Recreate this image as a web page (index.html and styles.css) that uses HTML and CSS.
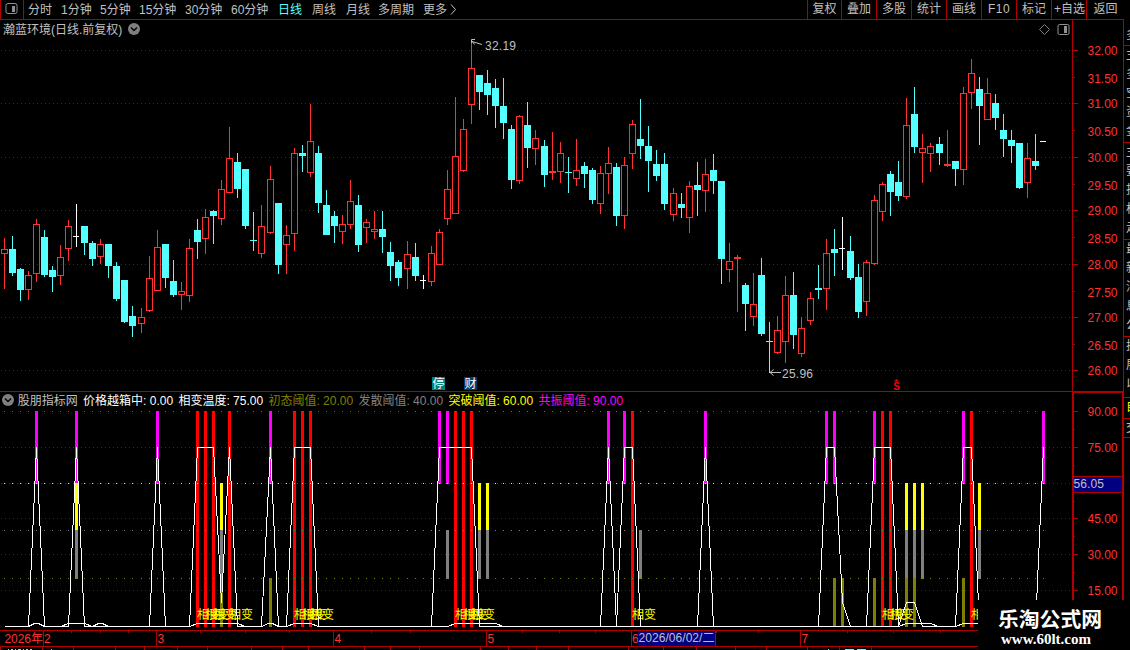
FILE: index.html
```html
<!DOCTYPE html>
<html lang="zh-CN">

<head>
  <meta charset="UTF-8">
  <meta name="viewport" content="width=device-width, initial-scale=1.0">
  <title>瀚蓝环境 日线</title>
  <link rel="stylesheet" href="styles.css">
</head>

<body>
  <div class="terminal">
    <!-- toolbar -->
    <div class="toolbar">
      <div class="layout-btn">
        <svg width="13" height="12" viewBox="0 0 13 12">
          <rect x="1" y=".5" width="11" height="10" rx="2" fill="none" stroke="#909090" />
          <rect x="7" y="3" width="3" height="6" fill="#909090" />
        </svg>
      </div>
      <div class="periods">
        <span>分时</span>
        <span>1分钟</span>
        <span>5分钟</span>
        <span>15分钟</span>
        <span>30分钟</span>
        <span>60分钟</span>
        <span class="active">日线</span>
        <span>周线</span>
        <span>月线</span>
        <span>多周期</span>
        <span>更多</span>
        <svg width="7" height="11" viewBox="0 0 7 11"><path d="M1 .5L5.5 5.5L1 10.5" fill="none" stroke="#c0c0c0" /></svg>
      </div>
      <div class="tools">
        <span>复权</span>
        <span>叠加</span>
        <span>多股</span>
        <span>统计</span>
        <span>画线</span>
        <span class="f10">F10</span>
        <span>标记</span>
        <span class="add">+自选</span>
        <span>返回</span>
      </div>
    </div>

    <div class="main">
      <div class="charts">
        <!-- kline -->
        <div class="panel kline">
          <svg id="kline" width="1124" height="371" viewBox="0 20 1124 371"></svg>
          <div class="caption">
            <span>瀚蓝环境(日线.前复权)</span>
            <svg class="fold" width="12" height="12" viewBox="0 0 12 12">
              <circle cx="6" cy="6" r="6" fill="#808080" />
              <path d="M3 4.5L6 7.5L9 4.5" fill="none" stroke="#000" stroke-width="1.4" />
            </svg>
            <div class="corner">
              <svg width="11" height="11" viewBox="0 0 11 11"><path d="M5.5 .5L10.5 5.5L5.5 10.5L.5 5.5Z" fill="none" stroke="#808080" /></svg>
              <svg width="13" height="12" viewBox="0 0 13 12">
                <rect x="1" y=".5" width="11" height="10" rx="1.5" fill="none" stroke="#909090" />
                <rect x="7" y="2" width="3" height="7" fill="#909090" />
              </svg>
            </div>
          </div>
        </div>

        <!-- indicator -->
        <div class="panel indicator">
          <svg id="indicator" width="1124" height="239" viewBox="0 391 1124 239"></svg>
          <div class="caption">
            <svg class="fold" width="12" height="12" viewBox="0 0 12 12">
              <circle cx="6" cy="6" r="6" fill="#808080" />
              <path d="M3 4.5L6 7.5L9 4.5" fill="none" stroke="#000" stroke-width="1.4" />
            </svg>
            <span>股朋指标网</span>
            <span class="white">价格越箱中: 0.00</span>
            <span class="white">相变温度: 75.00</span>
            <span class="olive">初态阈值: 20.00</span>
            <span class="gray">发散阈值: 40.00</span>
            <span class="yellow">突破阈值: 60.00</span>
            <span class="magenta">共振阈值: 90.00</span>
          </div>
        </div>

        <!-- dates -->
        <svg id="dates" width="1124" height="20" viewBox="0 630 1124 20"></svg>
      </div>

      <!-- side tabs -->
      <div class="side">
        <div class="tab t1">多</div>
        <div class="tab t2">主多空资金</div>
        <div class="tab t3">主要指标走</div>
        <div class="tab t4">最新消息公</div>
        <div class="tab t5">扩展以</div>
        <div class="tab t6">自</div>
        <div class="tab t7">交</div>
      </div>
    </div>

    <div class="watermark">
      <div class="site-name">乐淘公式网</div>
      <div class="site-url">www.60lt.com</div>
    </div>
  </div>

  <script src="chart.js"></script>
</body>

</html>
```
FILE: styles.css
```css
body {
  margin: 0;
  background: #000;
  overflow: hidden;
}

.terminal {
  position: relative;
  width: 1130px;
  height: 650px;
  overflow: hidden;
  background: #000;
  color: #c0c0c0;
  font: 12px/18px "Liberation Sans", "Noto Sans CJK SC", sans-serif;
  white-space: nowrap;
}

svg {
  display: block;
}

/* toolbar start */
.toolbar {
  display: flex;
  box-sizing: border-box;
  width: 1124px;
  height: 20px;
  border-bottom: 1px solid #b00000;
}

.layout-btn {
  box-sizing: border-box;
  width: 24px;
  padding: 3px 0 0 4px;
  border: solid #b00000;
  border-width: 0 1px;
}

.periods {
  display: grid;
  grid-template-columns: 33px 39px 39px 46px 46px 47px 34px 34px 32px 45px 27px 8px;
  align-items: center;
  margin-left: 4px;
}

.periods .active {
  color: #54ffff;
}

.tools {
  display: grid;
  grid-template-columns: 34px 35px 35px 35px 35px 35px 35px 35px 38px;
  margin-left: auto;
  line-height: 19px;
}

.tools span {
  border-left: 1px solid #b00000;
  text-align: center;
}

.tools .f10 {
  letter-spacing: .5px;
}

.tools .add {
  text-align: left;
  padding-left: 2px;
}
/* toolbar end */

.main {
  display: flex;
  height: 630px;
}

.charts {
  width: 1124px;
}

/* panel start */
.panel {
  display: grid;
}

.panel > * {
  grid-area: 1 / 1;
}

.caption {
  display: flex;
  align-items: center;
  height: 18px;
}

.caption span {
  padding-top: 1px;
}

.kline .caption {
  padding-left: 3px;
  gap: 6px;
}

.corner {
  display: flex;
  gap: 7px;
  margin: 1px 54px 0 auto;
}

.indicator .caption {
  padding: 0 0 0 2px;
  gap: 5.3px;
}

.indicator .fold {
  margin-right: -1.5px;
}

.white {
  color: #fff;
}

.olive {
  color: #808000;
}

.gray {
  color: #808080;
}

.yellow {
  color: #ff0;
}

.magenta {
  color: #f0f;
}
/* panel end */

/* svg text */
.scale {
  fill: #ff3232;
}

.note {
  fill: #c0c0c0;
}

.hit {
  fill: #ff0;
}

.badge {
  fill: #fff;
}

.sell {
  fill: #f00;
  font-size: 10px;
  font-weight: bold;
}

/* side start */
.side {
  width: 6px;
  overflow: hidden;
}

.tab {
  box-sizing: border-box;
  width: 6px;
  padding-left: 2px;
  overflow: hidden;
  border-bottom: 1px solid #b00000;
  line-height: 19px;
  white-space: normal;
  word-break: break-all;
}

.t1 {
  height: 26px;
  padding-top: 6px;
}

.t2 {
  height: 97px;
}

.t3 {
  height: 97px;
}

.t4 {
  height: 97px;
}

.t5 {
  height: 61px;
}

.t6 {
  height: 21px;
  color: #ff0;
}

.t7 {
  height: 19px;
}
/* side end */

/* watermark start */
.watermark {
  position: absolute;
  left: 978px;
  top: 600px;
  box-sizing: border-box;
  width: 152px;
  height: 50px;
  padding: 6px 8px 0 0;
  background: #000;
  color: #fff;
  text-align: center;
  font-weight: bold;
}

.site-name {
  font: bold 20.8px/24px "Noto Sans CJK SC", sans-serif;
}

.site-url {
  padding: 1px 8px 0 0;
  font: bold 15px/16px "Liberation Serif", serif;
}
/* watermark end */
```
FILE: chart.js
```js
var NS = "http://www.w3.org/2000/svg";
var RED = "#ff3232";
var CYAN = "#54ffff";
var LINE = "#b00000";

// [x, 最高, 实体上沿, 实体下沿, 最低, 类型]  r 阳线  c 阴线  w 平盘
var candles = [
  [4, 238, 249, 254, 289, "r"], [12, 236, 249, 273, 276, "c"], [20, 268, 269, 290, 301, "c"], [28, 271, 275, 290, 300, "r"],
  [36, 219, 224, 274, 282, "r"], [44, 230, 237, 275, 277, "c"], [52, 266, 270, 277, 292, "c"], [60, 245, 257, 276, 285, "r"],
  [68, 220, 226, 249, 261, "r"], [76, 204, 236, 237, 247, "w"], [84, 226, 226, 243, 255, "c"], [92, 241, 243, 259, 266, "c"],
  [100, 239, 244, 257, 264, "r"], [108, 244, 244, 266, 278, "c"], [116, 262, 266, 299, 301, "c"], [124, 280, 280, 322, 323, "c"],
  [132, 306, 316, 326, 337, "c"], [141, 308, 317, 324, 333, "r"], [149, 256, 278, 311, 312, "r"], [157, 230, 247, 291, 291, "r"],
  [165, 244, 244, 278, 288, "c"], [173, 260, 281, 295, 297, "c"], [181, 282, 291, 295, 310, "r"], [189, 239, 248, 296, 302, "r"],
  [197, 219, 230, 242, 259, "c"], [205, 209, 217, 239, 254, "r"], [213, 210, 211, 216, 244, "c"], [221, 180, 189, 219, 225, "r"],
  [229, 127, 158, 193, 193, "r"], [237, 153, 162, 189, 198, "c"], [245, 169, 169, 226, 229, "c"], [253, 212, 240, 241, 251, "c"],
  [261, 205, 226, 254, 258, "r"], [270, 166, 179, 233, 234, "r"], [278, 203, 203, 265, 274, "c"], [286, 225, 235, 245, 274, "r"],
  [294, 148, 153, 234, 251, "r"], [302, 145, 153, 156, 172, "c"], [310, 104, 141, 173, 177, "r"], [318, 146, 153, 203, 213, "c"],
  [326, 190, 205, 235, 235, "c"], [334, 211, 216, 226, 243, "c"], [342, 215, 224, 232, 244, "r"], [350, 180, 201, 225, 229, "r"],
  [358, 195, 205, 245, 252, "c"], [366, 219, 222, 228, 243, "r"], [374, 211, 229, 232, 239, "r"], [382, 211, 229, 237, 253, "c"],
  [390, 242, 252, 266, 281, "c"], [398, 260, 262, 278, 286, "c"], [407, 241, 254, 269, 289, "r"], [415, 243, 257, 276, 281, "c"],
  [423, 275, 280, 281, 289, "w"], [431, 246, 253, 282, 286, "r"], [439, 229, 232, 265, 265, "r"], [447, 170, 189, 219, 225, "r"],
  [455, 97, 156, 214, 214, "r"], [463, 119, 129, 171, 172, "r"], [471, 43, 68, 105, 124, "r"], [479, 75, 75, 92, 110, "c"],
  [487, 70, 83, 95, 115, "c"], [495, 79, 88, 106, 128, "c"], [503, 78, 106, 123, 139, "c"], [511, 125, 129, 180, 189, "c"],
  [519, 115, 116, 181, 184, "r"], [527, 102, 125, 148, 168, "c"], [535, 130, 138, 149, 165, "r"], [544, 140, 146, 175, 187, "c"],
  [552, 132, 171, 173, 180, "r"], [560, 142, 153, 172, 183, "r"], [568, 157, 172, 173, 193, "c"], [576, 139, 170, 179, 186, "r"],
  [584, 162, 166, 174, 188, "c"], [592, 168, 170, 200, 204, "c"], [600, 166, 173, 204, 214, "r"], [608, 147, 163, 174, 194, "r"],
  [616, 163, 167, 216, 226, "c"], [624, 157, 165, 216, 229, "r"], [632, 120, 124, 154, 169, "r"], [640, 99, 139, 146, 159, "c"],
  [648, 126, 146, 161, 192, "c"], [656, 150, 164, 176, 181, "c"], [664, 153, 164, 204, 210, "c"], [673, 188, 193, 215, 221, "r"],
  [681, 193, 204, 208, 218, "c"], [689, 181, 186, 218, 233, "r"], [697, 162, 185, 190, 216, "c"], [705, 159, 174, 191, 212, "r"],
  [713, 154, 170, 181, 194, "c"], [721, 181, 181, 259, 284, "c"], [729, 243, 261, 270, 282, "r"], [737, 255, 257, 259, 312, "r"],
  [745, 283, 285, 304, 331, "c"], [753, 273, 304, 317, 326, "r"], [761, 258, 275, 334, 336, "c"], [769, 322, 341, 342, 373, "c"],
  [777, 316, 330, 353, 354, "r"], [785, 276, 295, 342, 363, "r"], [793, 272, 295, 335, 349, "c"], [801, 317, 328, 354, 357, "r"],
  [810, 292, 298, 321, 325, "r"], [818, 265, 288, 290, 299, "c"], [826, 239, 253, 289, 310, "r"], [834, 229, 249, 253, 276, "c"],
  [842, 217, 248, 249, 270, "w"], [850, 236, 251, 278, 280, "c"], [858, 264, 277, 312, 318, "c"], [866, 260, 262, 302, 316, "r"],
  [874, 195, 200, 264, 265, "r"], [882, 182, 184, 212, 221, "r"], [890, 171, 174, 192, 216, "c"], [898, 161, 182, 196, 201, "c"],
  [906, 98, 125, 197, 199, "r"], [914, 87, 114, 147, 153, "c"], [922, 134, 148, 153, 183, "r"], [930, 143, 146, 154, 172, "r"],
  [939, 137, 144, 153, 165, "c"], [947, 130, 164, 166, 167, "r"], [955, 161, 161, 169, 186, "c"], [963, 87, 93, 170, 185, "r"],
  [971, 59, 73, 93, 109, "r"], [979, 77, 89, 106, 145, "c"], [987, 78, 93, 120, 120, "r"], [995, 94, 103, 118, 130, "c"],
  [1003, 114, 130, 139, 157, "c"], [1011, 130, 140, 146, 163, "c"], [1019, 143, 143, 188, 189, "c"], [1027, 143, 158, 183, 198, "r"],
  [1035, 134, 161, 166, 170, "c"], [1043, 141, 141, 142, 142, "w"]
];

function add(svg, name, attrs, text) {
  var el = document.createElementNS(NS, name);
  for (var k in attrs) {
    el.setAttribute(k, attrs[k]);
  }
  if (text) {
    el.textContent = text;
  }
  svg.appendChild(el);
}

function rect(svg, x, y, w, h, color) {
  add(svg, "rect", { x: x, y: y, width: w, height: h, fill: color });
}

function text(svg, x, y, cls, str, len) {
  var attrs = { x: x, y: y, "class": cls };
  if (len) {
    attrs.textLength = len;
  }
  add(svg, "text", attrs, str);
}

// 点状横线，每4像素一点
function dots(svg, y) {
  add(svg, "path", { d: "M1 " + (y + .5) + "H1072", stroke: "#a00000", "stroke-dasharray": "1 3" });
}

function polyline(svg, points) {
  add(svg, "polyline", { points: points, fill: "none", stroke: "#fff", "shape-rendering": "crispEdges" });
}

function drawKline() {
  var svg = document.getElementById("kline");
  var ys = [50, 78, 103, 131, 157, 185, 210, 238, 264, 292, 317, 345, 370];
  rect(svg, 1072, 20, 1, 371, LINE);
  rect(svg, 1123, 20, 1, 371, LINE);
  ys.forEach(function (y, i) {
    if (i % 2 == 0) {
      dots(svg, y);
      rect(svg, 1073, y, 5, 1, LINE);
    } else {
      rect(svg, 1073, y - 1, 2, 1, LINE);
    }
    text(svg, 1087.5, y + 5, "scale", (32 - i * .5).toFixed(2), 30);
  });

  candles.forEach(function (c) {
    var x = c[0];
    var color = c[5] == "r" ? RED : c[5] == "c" ? CYAN : "#fff";
    if (c[5] == "r" && c[3] - c[2] > 2) {
      rect(svg, x, c[1], 1, c[2] - c[1], color);
      rect(svg, x, c[3], 1, c[4] - c[3], color);
      add(svg, "rect", { x: x - 2.5, y: c[2] + .5, width: 6, height: c[3] - c[2] - 1, fill: "none", stroke: color });
    } else {
      rect(svg, x, c[1], 1, c[4] - c[1], color);
      rect(svg, x - 3, c[2], c[5] == "w" ? 6 : 7, c[3] - c[2], color);
    }
  });

  // 最高价、最低价
  add(svg, "path", { d: "M482 44.5L472 41.5M475 39.5H471.5V43M472 41L474.5 44.5", fill: "none", stroke: "#c0c0c0" });
  text(svg, 485, 50, "note", "32.19", 31);
  add(svg, "path", { d: "M781 372.5H770M773.5 369.5L770 372.5L773.5 375.5", fill: "none", stroke: "#c0c0c0" });
  text(svg, 782, 378, "note", "25.96", 31);

  // 事件标记
  rect(svg, 432, 377, 13, 13, "#008080");
  text(svg, 432.5, 388, "badge", "停");
  rect(svg, 464, 377, 13, 13, "#003c70");
  text(svg, 464.5, 388, "badge", "财");
  text(svg, 893.3, 390, "sell", "S");
  add(svg, "path", { d: "M894 381.5L896.5 379L899 381.5Z", fill: "#f00" });
}

function drawIndicator() {
  var svg = document.getElementById("indicator");
  var bars = {
    "#ff00ff": [411, 73, [36, 76, 157, 270, 439, 447, 608, 624, 705, 826, 834, 874, 963, 1043]],
    "#ffff00": [483, 48, [76, 221, 479, 487, 906, 914, 922, 979]],
    "#808080": [530, 49, [76, 221, 447, 479, 487, 640, 906, 914, 922, 979]],
    "#808000": [578, 49, [221, 270, 834, 842, 874, 906, 914, 963]],
    "#ff0000": [411, 216, [197, 205, 213, 229, 294, 302, 310, 455, 463, 471, 632, 882, 890, 971]]
  };
  rect(svg, 0, 391, 1124, 1, LINE);
  rect(svg, 1072, 391, 52, 2, LINE);
  rect(svg, 1072, 391, 2, 239, LINE);
  rect(svg, 1122, 391, 2, 239, LINE);

  [447, 483, 518, 554, 590].forEach(function (y) {
    dots(svg, y);
  });
  [[411, "90.00"], [447, "75.00"], [518, "45.00"], [554, "30.00"], [590, "15.00"]].forEach(function (t) {
    rect(svg, 1074, t[0], 4, 1, LINE);
    text(svg, 1087.5, t[0] + 5, "scale", t[1], 30);
  });
  [429, 465, 501, 536, 572].forEach(function (y) {
    rect(svg, 1074, y, 1, 1, LINE);
  });

  for (var color in bars) {
    bars[color][2].forEach(function (x) {
      rect(svg, x - 1, bars[color][0], 3, bars[color][1], color);
    });
  }
  // 阈值线
  candles.forEach(function (c) {
    rect(svg, c[0], 411, 1, 1, "#f0f");
    rect(svg, c[0], 483, 1, 1, "#ff0");
    rect(svg, c[0], 530, 1, 1, "#808080");
    rect(svg, c[0], 578, 1, 1, "#808000");
  });

  bars["#ff0000"][2].forEach(function (x) {
    text(svg, x, 619, "hit", "相变");
  });

  polyline(svg, "4.5,626.5 28.5,626.5 36.5,447.5 44.5,626.5 68.5,626.5 76.5,447.5 84.5,626.5 149.5,626.5 157.5,447.5 165.5,626.5 " +
    "189.5,626.5 197.5,447.5 213.5,447.5 221.5,602.5 229.5,447.5 237.5,626.5 261.5,626.5 270.5,447.5 278.5,626.5 " +
    "286.5,626.5 294.5,447.5 310.5,447.5 318.5,626.5 431.5,626.5 439.5,447.5 471.5,447.5 479.5,626.5 600.5,626.5 " +
    "608.5,447.5 616.5,626.5 624.5,447.5 632.5,447.5 640.5,626.5 697.5,626.5 705.5,447.5 713.5,626.5 818.5,626.5 " +
    "826.5,447.5 834.5,447.5 842.5,602.5 850.5,626.5 866.5,626.5 874.5,447.5 890.5,447.5 898.5,626.5 906.5,602.5 " +
    "914.5,602.5 922.5,626.5 955.5,626.5 963.5,447.5 971.5,447.5 979.5,626.5 1035.5,626.5 1043.5,447.5");
  polyline(svg, "4.5,626.5 28.5,626.5 34.5,623.5 38.5,623.5 44.5,626.5 60.5,626.5 68.5,623.5 84.5,623.5 92.5,626.5 98.5,623.5 " +
    "102.5,623.5 108.5,626.5 189.5,626.5 197.5,623.5 237.5,623.5 245.5,626.5 261.5,626.5 268.5,623.5 272.5,623.5 " +
    "278.5,626.5 286.5,626.5 294.5,623.5 310.5,623.5 318.5,626.5 447.5,626.5 455.5,623.5 495.5,623.5 503.5,626.5 " +
    "898.5,626.5 906.5,623.5 930.5,623.5 938.5,626.5 955.5,626.5 963.5,623.5 979.5,623.5");

  // 当前值
  rect(svg, 1074, 476, 48, 17, LINE);
  rect(svg, 1074, 477, 48, 15, "#000080");
  text(svg, 1073.5, 488, "note", "56.05", 30.5);
}

function drawDates() {
  var svg = document.getElementById("dates");
  rect(svg, 0, 630, 1072, 1, LINE);
  rect(svg, 0, 646, 1072, 1, LINE);
  [43, 156, 333, 486, 631, 800].forEach(function (x) {
    rect(svg, x, 631, 1, 15, LINE);
  });
  [71, 100, 128, 200, 245, 289, 371, 410, 522, 559, 595, 716, 758, 847, 893, 940].forEach(function (x) {
    rect(svg, x, 631, 1, 2, LINE);
  });
  text(svg, 4.5, 643, "scale", "2026年", 38.5);
  [[44, "2"], [157.5, "3"], [334.5, "4"], [487.5, "5"], [632, "6"], [801.5, "7"]].forEach(function (m) {
    text(svg, m[0], 643, "scale", m[1]);
  });
  rect(svg, 638, 631, 77, 15, "#000080");
  rect(svg, 715, 631, 1, 15, LINE);
  text(svg, 638.5, 642, "note", "2026/06/02/二", 76);

  // 底部标签栏
  [0, 42, 73, 115, 144, 177, 207, 251, 282, 308, 364, 390, 419, 480, 508, 536, 568, 628, 663, 696, 735, 766, 807, 839, 871].forEach(function (x) {
    rect(svg, x, 647, 1, 3, LINE);
  });
  [[8, 1], [11, 2], [15, 1], [18, 3], [23, 1], [26, 2], [30, 2], [51, 1]].forEach(function (s) {
    rect(svg, s[0], 649, s[1], 1, "#c0c0c0");
  });
  rect(svg, 828, 649, 1, 1, CYAN);
  rect(svg, 845, 649, 9, 1, CYAN);
  rect(svg, 857, 649, 9, 1, CYAN);
}

drawKline();
drawIndicator();
drawDates();
```
